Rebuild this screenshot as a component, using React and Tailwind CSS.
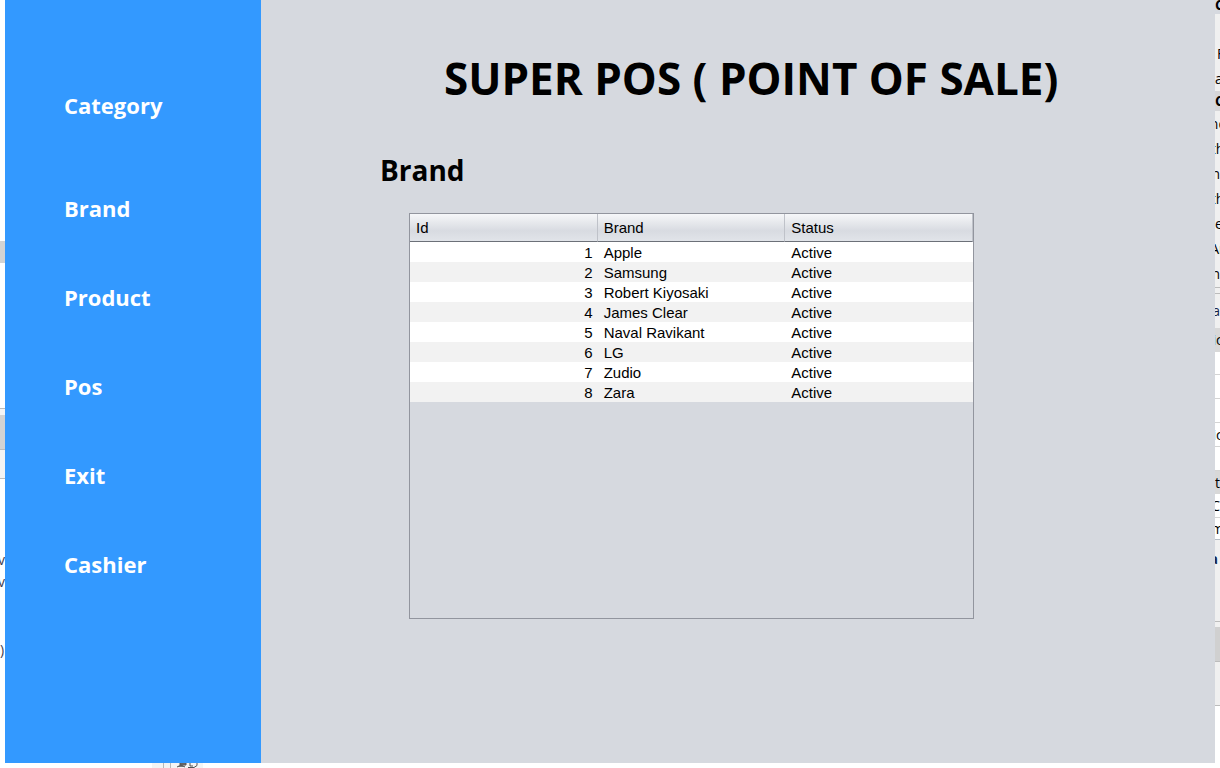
import React from "react";

const navItems = ["Category", "Brand", "Product", "Pos", "Exit", "Cashier"];

const brands = [
  "Apple",
  "Samsung",
  "Robert Kiyosaki",
  "James Clear",
  "Naval Ravikant",
  "LG",
  "Zudio",
  "Zara",
];

// Slices of the windows that lie behind the application window.
const leftEdge = [
  { cls: "h-[241px] bg-white" },
  { cls: "h-[22px] bg-[#d3d3d3]" },
  { cls: "h-[146px] border-b border-[#bcbcbc] bg-white" },
  { cls: "h-[6px] bg-[#f5f5f5]" },
  { cls: "h-[35px] border-b border-[#bcbcbc] bg-[#d3d3d3]" },
  { cls: "h-[29px] border-b border-[#bcbcbc] bg-[#f3f3f3]" },
  { cls: "h-[70px] bg-white" },
  { cls: "h-[22px] justify-end bg-white text-[#3c3c50]", text: "v" },
  { cls: "h-[22px] justify-end bg-white text-[#3c3c50]", text: "v" },
  { cls: "h-[46px] bg-white" },
  { cls: "h-[22px] bg-white text-[#3c3c50]", text: ")" },
];

const rightEdge = [
  { cls: "h-[10px] bg-[#d6d9df] font-bold", text: "C" },
  { cls: "h-[4px] bg-[#d6d9df]" },
  { cls: "h-[28px] bg-[#f0f0f0]" },
  { cls: "h-[24px] bg-[#f0f0f0] pl-[2px]", text: "F" },
  { cls: "h-[25px] bg-[#f0f0f0]", text: "a" },
  { cls: "h-[20px] bg-[#d6d6d8] font-bold", text: "C" },
  { cls: "h-[26px] justify-center bg-[#f0f0f0]", text: "nc" },
  { cls: "h-[24px] justify-center bg-[#f0f0f0]", text: "th" },
  { cls: "h-[25px] justify-end bg-[#f0f0f0]", text: "n" },
  { cls: "h-[25px] justify-center bg-[#f0f0f0]", text: "th" },
  { cls: "h-[26px] bg-[#f0f0f0]", text: "e" },
  { cls: "h-[24px] justify-center bg-[#f0f0f0]", text: "Ar" },
  { cls: "h-[27px] justify-end border-b border-[#bcbcbc] bg-[#f0f0f0]", text: "n" },
  { cls: "h-[6px] border-b border-[#bcbcbc] bg-[#f0f0f0]" },
  { cls: "h-[34px] justify-end bg-[#f0f0f0] text-[#14244a]", text: "a" },
  { cls: "h-[24px] justify-center bg-[#d8d8d8]", text: "ic" },
  { cls: "h-[23px] border-b border-[#d4d4d4] bg-white" },
  { cls: "h-[24px] border-b border-[#d4d4d4] bg-white" },
  { cls: "h-[24px] border-b border-[#d4d4d4] bg-white" },
  { cls: "h-[24px] justify-center border-b border-[#d4d4d4] bg-white", text: "ic" },
  { cls: "h-[24px] border-b border-[#d4d4d4] bg-white" },
  { cls: "h-[23px] bg-[#d8d8d8]", text: "t" },
  { cls: "h-[24px] justify-end border-b border-[#d4d4d4] bg-white", text: "C" },
  { cls: "h-[22px] justify-center border-b border-[#b4bcc4] bg-white", text: "m" },
  { cls: "h-[38px] justify-end bg-[#f0f0f0] pr-[2px] font-bold text-[#14244a]", text: "a" },
  { cls: "h-[44px] border-b border-[#bcbcbc] bg-[#f0f0f0]" },
  { cls: "h-[5px] bg-[#f0f0f0]" },
  { cls: "h-[35px] border-b border-[#bcbcbc] bg-[#d0d0d0]" },
  { cls: "h-[44px] border-b border-[#bcbcbc] bg-[#f0f0f0]" },
];

function Edge({ slices }) {
  return (
    <div
      aria-hidden="true"
      className="w-[5px] shrink-0 overflow-hidden bg-white text-sm text-black"
    >
      {slices.map((slice, i) => (
        <div key={i} className={"flex items-center overflow-hidden " + slice.cls}>
          {slice.text && <span className="shrink-0">{slice.text}</span>}
        </div>
      ))}
    </div>
  );
}

function Sidebar() {
  return (
    <nav aria-label="Main" className="w-64 shrink-0 bg-[#3399ff] px-[59px] pt-[91px]">
      <ul className="flex flex-col gap-[61px]">
        {navItems.map((item) => (
          <li key={item} className="first:mb-[14px]">
            <button
              type="button"
              className="block cursor-pointer text-[22px] leading-7 font-bold text-white"
            >
              {item}
            </button>
          </li>
        ))}
      </ul>
    </nav>
  );
}

function BrandTable() {
  return (
    <div className="mt-6 mr-[241px] ml-[148px] min-h-[406px] border border-[#92959e]">
      <table
        aria-labelledby="brand-heading"
        className="w-full table-fixed border-separate border-spacing-0 text-left font-['Liberation_Sans',Arial,sans-serif] text-[15px] text-black"
      >
        <thead>
          <tr className="bg-linear-to-b from-[#f6f7f9] via-[#d8dbe1] via-60% to-[#e2e5ea] leading-5">
            {["Id", "Brand", "Status"].map((name) => (
              <th
                key={name}
                scope="col"
                className="h-7 border-r border-b border-r-[#bfc2c9] border-b-[#6c7078] p-0 pl-[6px] font-normal"
              >
                {name}
              </th>
            ))}
          </tr>
        </thead>
        <tbody className="leading-[18px]">
          {brands.map((brand, i) => (
            <tr key={brand} className="bg-white even:bg-[#f2f2f2]">
              <td className="pt-[2px] pr-[5px] pb-0 pl-0 text-right">{i + 1}</td>
              <td className="pt-[2px] pr-0 pb-0 pl-[6px]">{brand}</td>
              <td className="pt-[2px] pr-0 pb-0 pl-[6px]">Active</td>
            </tr>
          ))}
        </tbody>
      </table>
    </div>
  );
}

export default function App() {
  return (
    <div className="flex min-h-screen flex-col bg-white font-['Open_Sans','Noto_Sans',sans-serif]">
      <div className="flex flex-1">
        <Edge slices={leftEdge} />
        <Sidebar />
        <main className="min-w-0 flex-1 bg-[#d6d9df] pt-12 text-black">
          <h1 className="pl-[183px] text-[44px] leading-[60px] font-bold whitespace-nowrap">
            SUPER POS ( POINT OF SALE)
          </h1>
          <h2
            id="brand-heading"
            className="mt-[43px] pl-[119px] text-[28px] leading-[38px] font-bold"
          >
            Brand
          </h2>
          <BrandTable />
        </main>
        <Edge slices={rightEdge} />
      </div>
      <div aria-hidden="true" className="flex h-[5px] pl-[152px]">
        <svg width="51" height="5" viewBox="0 0 51 5">
          <rect width="51" height="5" fill="#f4f4f4" />
          <path d="M11.5 0v5M18.5 0v5" stroke="#b8b8b8" />
          <path d="M25 4l4-2 4 2M28 0h6v2h-6z" fill="#777" stroke="#555" />
          <path d="M38 0v3h3M36 4.500h6l3-2V0" fill="none" stroke="#555" />
        </svg>
      </div>
    </div>
  );
}
